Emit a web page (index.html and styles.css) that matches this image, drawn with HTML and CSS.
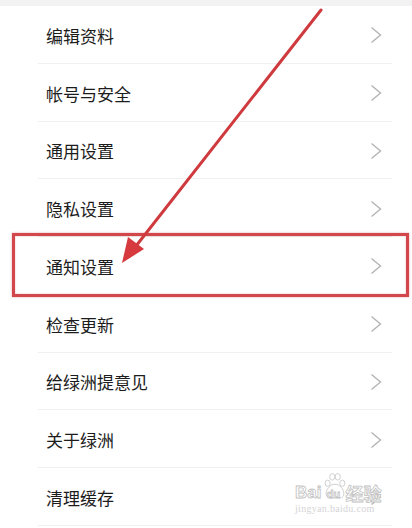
FILE: index.html
```html
<!DOCTYPE html>
<html>
<head>
    <title>设置</title>
    <link rel="stylesheet" href="styles.css">
</head>
<body>
    <div class="screen">
        <div class="top-band"></div>
        <ul class="menu">
            <li class="item"><span>编辑资料</span><svg class="chev" viewBox="0 0 12 18"><path d="M1.5 1.5 L10.5 9 L1.5 16.5"/></svg></li>
            <li class="item"><span>帐号与安全</span><svg class="chev" viewBox="0 0 12 18"><path d="M1.5 1.5 L10.5 9 L1.5 16.5"/></svg></li>
            <li class="item"><span>通用设置</span><svg class="chev" viewBox="0 0 12 18"><path d="M1.5 1.5 L10.5 9 L1.5 16.5"/></svg></li>
            <li class="item"><span>隐私设置</span><svg class="chev" viewBox="0 0 12 18"><path d="M1.5 1.5 L10.5 9 L1.5 16.5"/></svg></li>
            <li class="item"><span>通知设置</span><svg class="chev" viewBox="0 0 12 18"><path d="M1.5 1.5 L10.5 9 L1.5 16.5"/></svg></li>
            <li class="item"><span>检查更新</span><svg class="chev" viewBox="0 0 12 18"><path d="M1.5 1.5 L10.5 9 L1.5 16.5"/></svg></li>
            <li class="item"><span>给绿洲提意见</span><svg class="chev" viewBox="0 0 12 18"><path d="M1.5 1.5 L10.5 9 L1.5 16.5"/></svg></li>
            <li class="item"><span>关于绿洲</span><svg class="chev" viewBox="0 0 12 18"><path d="M1.5 1.5 L10.5 9 L1.5 16.5"/></svg></li>
            <li class="item"><span>清理缓存</span><svg class="chev" viewBox="0 0 12 18"><path d="M1.5 1.5 L10.5 9 L1.5 16.5"/></svg></li>
        </ul>

        <!-- annotation drawn over the screenshot -->
        <div class="highlight"></div>
        <svg class="arrow" viewBox="0 0 412 528">
            <line x1="321" y1="10" x2="136" y2="246" />
            <polygon points="122,263 128,237 144,249" />
        </svg>

        <div class="watermark">
            <svg class="paw" viewBox="0 0 24 30">
                <ellipse cx="4" cy="12" rx="2.8" ry="3.4"/>
                <ellipse cx="9" cy="5" rx="2.8" ry="3.6"/>
                <ellipse cx="15" cy="5" rx="2.8" ry="3.6"/>
                <ellipse cx="20" cy="12" rx="2.8" ry="3.4"/>
                <path d="M12 13 C6 13 1.5 20 2.5 25 C3.5 29 9 28 12 28 C15 28 20.5 29 21.5 25 C22.5 20 18 13 12 13 Z"/>
            </svg>
            <div class="wm-main"><span>Bai</span><span class="du">du</span><span class="jy">经验</span></div>
            <div class="wm-url">jingyan.baidu.com</div>
        </div>
    </div>
</body>
</html>
```

FILE: styles.css
```css
body {
    margin: 0;
    background-color: #fff;
    font-family: "Noto Sans CJK SC", "Noto Sans", sans-serif;
}

.screen {
    position: relative;
    width: 412px;
    height: 528px;
    overflow: hidden;
    background-color: #fff;
}

.top-band {
    height: 6px;
    background-color: #f2f2f2;
}

.menu {
    list-style: none;
    margin: 0;
    padding: 0;
}

.item {
    display: flex;
    align-items: center;
    justify-content: space-between;
    height: 57.75px;
    box-sizing: border-box;
    margin-left: 38px;
    margin-right: 20px;
    padding-left: 8px;
    padding-right: 10px;
    padding-top: 2px;
    border-bottom: 1px solid #f0f0f0;
    font-size: 17px;
    color: #1c1c1c;
}

.chev {
    width: 12px;
    height: 18px;
    fill: none;
    stroke: #b4b4b4;
    stroke-width: 1.4;
}

.highlight {
    position: absolute;
    left: 12px;
    top: 233px;
    width: 391px;
    height: 58px;
    border: 3px solid #d2474b;
    box-shadow: 0 0 2px rgba(210, 71, 75, 0.5), inset 0 0 2px rgba(210, 71, 75, 0.4);
}

.arrow {
    position: absolute;
    left: 0;
    top: 0;
    width: 412px;
    height: 528px;
}

.arrow line {
    stroke: #cf3a3e;
    stroke-width: 3;
    stroke-linecap: round;
}

.arrow polygon {
    fill: #d63a3e;
}

.watermark {
    position: absolute;
    left: 295px;
    top: 470px;
    width: 92px;
    color: #fff;
}

.paw {
    position: absolute;
    left: 29px;
    top: 2px;
    width: 22px;
    height: 28px;
    fill: #fff;
    stroke: #c6c6c6;
    stroke-width: 0.9;
}

.wm-main {
    position: relative;
    margin-top: 14px;
    font-family: "Liberation Sans", "Noto Sans CJK SC", sans-serif;
    font-size: 17px;
    font-weight: bold;
    line-height: 18px;
    color: #fff;
    -webkit-text-stroke: 0.8px #c2c2c2;
    display: flex;
    align-items: flex-end;
}

.wm-main .du {
    width: 24px;
    text-align: center;
    font-size: 11px;
    line-height: 15px;
}

.wm-main .jy {
    font-family: "Noto Sans CJK SC", sans-serif;
    font-size: 18px;
    line-height: 18px;
}

.wm-url {
    font-family: "Liberation Serif", serif;
    font-size: 10px;
    line-height: 13px;
    color: #d4d4d4;
    letter-spacing: 0.3px;
}
```
